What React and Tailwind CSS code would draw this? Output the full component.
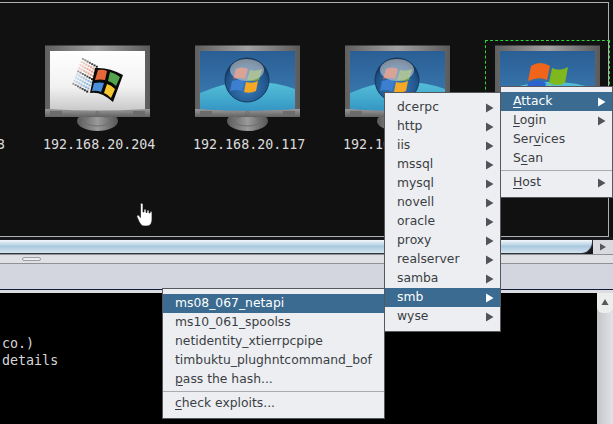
import React from 'react';

const attackItems = ['dcerpc', 'http', 'iis', 'mssql', 'mysql', 'novell', 'oracle', 'proxy', 'realserver', 'samba', 'smb', 'wyse'];

const hosts = [
  { id: 'w2k', os: 'win2000', label: '192.168.20.204', left: 'left-[45px]' },
  { id: 'v1', os: 'vista', label: '192.168.20.117', left: 'left-[195px]' },
  { id: 'v2', os: 'vista', label: '192.168.20.117', left: 'left-[345px]' },
  { id: 'w7', os: 'win7', label: '', left: 'left-[495px]' },
];

function Monitor({ id, os }) {
  const dots = [];
  for (let col = 0; col < 7; col++) {
    for (let row = 0; row < 9; row++) {
      const x = 37 - row * 1.2 + col * 2.3;
      const y = 13 + row * 3.1 + col * 1.3;
      const top = row < 4;
      dots.push(
        <rect
          key={col + '-' + row}
          x={x}
          y={y}
          width="2"
          height="1.9"
          fill={row === 0 || row === 4 || row === 8 ? '#1c1c1c' : top ? '#e58f76' : '#7fadd8'}
          opacity={0.4 + col * 0.1}
        />
      );
    }
  }

  return (
    <svg width="105" height="86" viewBox="0 0 105 86" className="block">
      <defs>
        <linearGradient id={id + 'frame'} x1="0" y1="0" x2="1" y2="0">
          <stop offset="0" stopColor="#5f5f5f" />
          <stop offset="0.5" stopColor="#a2a2a2" />
          <stop offset="1" stopColor="#5a5a5a" />
        </linearGradient>
        <linearGradient id={id + 'chin'} x1="0" y1="0" x2="0" y2="1">
          <stop offset="0" stopColor="#9a9a9a" />
          <stop offset="1" stopColor="#626262" />
        </linearGradient>
        <linearGradient id={id + 'white'} x1="0" y1="0" x2="0" y2="1">
          <stop offset="0" stopColor="#ffffff" />
          <stop offset="0.6" stopColor="#f2f2f2" />
          <stop offset="1" stopColor="#c9c9c9" />
        </linearGradient>
        <linearGradient id={id + 'blue'} x1="0" y1="0" x2="0" y2="1">
          <stop offset="0" stopColor="#2a5f95" />
          <stop offset="1" stopColor="#3d7fb6" />
        </linearGradient>
        <linearGradient id={id + 'hill'} x1="0" y1="0" x2="0" y2="1">
          <stop offset="0" stopColor="#55c0d8" />
          <stop offset="1" stopColor="#3597c4" />
        </linearGradient>
        <radialGradient id={id + 'orb'} cx="0.5" cy="0.65" r="0.6">
          <stop offset="0" stopColor="#3a7fc0" />
          <stop offset="0.8" stopColor="#1f5288" />
          <stop offset="1" stopColor="#123256" />
        </radialGradient>
        <linearGradient id={id + 'stand'} x1="0" y1="0" x2="1" y2="0">
          <stop offset="0" stopColor="#5a5a5a" />
          <stop offset="0.5" stopColor="#9a9a9a" />
          <stop offset="1" stopColor="#555555" />
        </linearGradient>
      </defs>

      <ellipse cx="52.5" cy="76" rx="20.5" ry="10" fill={`url(#${id}stand)`} />
      <ellipse cx="52.5" cy="76" rx="13" ry="5" fill="none" stroke="#6d6d6d" />
      <rect x="0" y="0.5" width="105" height="71.5" fill={`url(#${id}frame)`} />
      <rect x="0" y="64" width="105" height="8" fill={`url(#${id}chin)`} />
      <rect x="5" y="66" width="12" height="4.5" fill="#6c6c6c" />
      <rect x="88" y="66" width="12" height="4.5" fill="#6c6c6c" />
      <circle cx="52.5" cy="68" r="1.5" fill="none" stroke="#6e6e6e" />

      {os === 'win2000' ? (
        <>
          <path d="M5 6H100V64Q52 67 5 64Z" fill={`url(#${id}white)`} />
          {dots}
          <path d="M50 23Q64 22 78 30L68 57Q56 46 45 48Z" fill="#0b0b0b" />
          <path d="M53 25Q58 24 62 26L60 35Q55 34 50 35Z" fill="#e4683a" />
          <path d="M65 27Q70 28 75 32L71 41Q67 37 63 36Z" fill="#55a44c" />
          <path d="M49 38Q55 37 59 38L56 47Q52 45 47 46Z" fill="#4a8fdb" />
          <path d="M62 39Q66 40 70 44L66 53Q62 49 59 48Z" fill="#f7c92e" />
        </>
      ) : (
        <>
          <path d="M5 6H100V64Q52 67 5 64Z" fill={`url(#${id}blue)`} />
          <path d="M5 48Q30 37 52 37Q80 36 100 44V64Q52 67 5 64Z" fill={`url(#${id}hill)`} />
        </>
      )}

      {os === 'vista' && (
        <>
          <circle cx="52" cy="35" r="22" fill={`url(#${id}orb)`} stroke="#17395f" />
          <path d="M41 24Q47 21 53 24L50 34Q44 32 38 34Z" fill="#d9634a" />
          <path d="M55 25Q61 27 67 24L64 35Q58 37 52 35Z" fill="#6fa34b" />
          <path d="M37 36Q43 34 49 36L47 46Q41 44 35 46Z" fill="#3c7fd0" />
          <path d="M51 37Q57 39 63 36L61 46Q55 49 49 47Z" fill="#f4a825" />
          <ellipse cx="52" cy="25" rx="17" ry="11" fill="#d8d8d8" opacity="0.55" />
        </>
      )}

      {os === 'win7' && (
        <>
          <path d="M36 21Q45 15 55 21L52 35Q44 31 33 36Z" fill="#f0651a" />
          <path d="M57 23Q65 27 73 22L70 38Q63 42 54 38Z" fill="#7fb81c" />
          <path d="M33 38Q42 33 51 38L48 52H30Z" fill="#2a62d0" />
          <path d="M54 40Q62 44 70 41L68 52H50Z" fill="#f5bd1b" />
        </>
      )}
    </svg>
  );
}

function Arrow({ active }) {
  return (
    <svg width="8" height="10" viewBox="0 0 8 10" className="shrink-0">
      <path d="M0 0.5L7.5 5L0 9.5Z" fill={active ? '#ffffff' : '#50535a'} />
    </svg>
  );
}

function MenuRow({ active, sub, children }) {
  return (
    <div
      className={
        'flex h-[19px] items-center justify-between pl-3 pr-[6px] ' +
        (active ? 'bg-[#3b6b90] text-white' : 'text-[#3a3e42]')
      }
    >
      <span className="mb-[1px] whitespace-nowrap">{children}</span>
      {sub && <Arrow active={active} />}
    </div>
  );
}

function Mnemonic({ children }) {
  return <span className="underline underline-offset-2">{children}</span>;
}

function Separator() {
  return <div className="my-[2px] h-px bg-[#a9abae]" />;
}

function Menu({ className, children }) {
  return (
    <div
      className={
        'absolute border border-[#55585c] bg-[#edeef2] py-[5px] text-[12.35px] leading-[19px] [font-family:"DejaVu_Sans",sans-serif] ' +
        className
      }
    >
      {children}
    </div>
  );
}

function HandCursor() {
  return (
    <svg width="18" height="25" viewBox="0 0 18 25" className="absolute left-[136px] top-[202px]">
      <path
        d="M4.5 2.5C4.5 .8 7 .8 7 2.5V10L8 10V8C8 6.8 10 6.8 10 8V10.5H11V9C11 7.8 13 7.8 13 9V11H14V10.5C14 9.3 16 9.3 16 10.5V17C16 21 14.5 24 11 24H8C5.5 24 4.5 22 3 19.5L1 15C.4 13.5 2 12.5 3 13.5L4.5 15.5Z"
        fill="#ffffff"
        stroke="#1a1a1a"
        strokeWidth="0.7"
      />
    </svg>
  );
}

export default function App() {
  return (
    <div className="relative flex h-[424px] w-[613px] flex-col overflow-hidden bg-[#d3d6de] [font-family:'DejaVu_Sans_Mono',monospace]">
      {/* Host graph */}
      <div className="relative h-[237px] shrink-0 bg-[#111111]">
        <div className="absolute left-0 top-[2px] h-[235px] w-[609px] border-r border-t border-b border-[#aeb2b4]" />
        {hosts.map((h) => (
          <div key={h.id} className={'absolute top-[45px] ' + h.left}>
            <Monitor id={h.id} os={h.os} />
            <div className="-ml-[2px] mt-[6px] w-[112px] text-center text-[13.33px] leading-[16px] text-[#dcdcdc]">{h.label}</div>
          </div>
        ))}
        <div className="absolute right-[608px] top-[137px] text-[13.33px] leading-[16px] text-[#dcdcdc]">3</div>
        <div className="absolute left-[485px] top-[40px] h-[60px] w-[125px] border border-dashed border-[#2bd636]" />
        <HandCursor />
      </div>

      {/* Horizontal scrollbar */}
      <div className="flex h-[17px] shrink-0 items-stretch bg-[#17191c] pt-[3px]">
        <div className="h-[14px] w-[593px] rounded-br-[12px] border-b border-r border-[#31363b] bg-gradient-to-b from-[#f3f7fa] via-[#a9c9df] to-[#d4e4ef]" />
        <div className="flex w-[20px] items-center justify-center bg-[#d8dae0]">
          <svg width="8" height="8" viewBox="0 0 8 8">
            <path d="M1 0.5L7 4L1 7.5Z" fill="#55585c" />
          </svg>
        </div>
      </div>

      {/* Split divider */}
      <div className="flex h-[10px] shrink-0 items-center border-y border-[#8f9296] bg-[#dfe0e3] pl-[22px]">
        <div className="h-[4px] w-[19px] rounded-full border border-[#9a9da1] bg-[#eeeeee]" />
      </div>

      {/* Tab strip */}
      <div className="h-[26px] shrink-0 border-b border-[#0f1c38] bg-[#d3d6de]" />
      <div className="h-[3px] shrink-0 bg-[#dcdde2]" />

      {/* Console */}
      <div className="flex min-h-0 flex-1 bg-black">
        <div className="flex-1 pl-[2px] pt-[42px] text-[13.33px] leading-[17px] text-[#d6d6d6]">
          <div>co.)</div>
          <div>details</div>
        </div>
        <div className="flex w-[16px] flex-col bg-gradient-to-r from-[#c4c5c8] to-[#e2e3e6]">
          <div className="flex h-[20px] justify-center rounded-b-[6px] bg-[#eceded] pt-[5px]">
            <svg width="8" height="8" viewBox="0 0 8 8">
              <path d="M4 1L7.5 7H.5Z" fill="#55585c" />
            </svg>
          </div>
        </div>
      </div>

      <Menu className="left-[162px] top-[288px] w-[223px]">
        <MenuRow active>ms08_067_netapi</MenuRow>
        <MenuRow>ms10_061_spoolss</MenuRow>
        <MenuRow>netidentity_xtierrpcpipe</MenuRow>
        <MenuRow>timbuktu_plughntcommand_bof</MenuRow>
        <MenuRow>
          <Mnemonic>p</Mnemonic>ass the hash...
        </MenuRow>
        <Separator />
        <MenuRow>
          <Mnemonic>c</Mnemonic>heck exploits...
        </MenuRow>
      </Menu>

      <Menu className="left-[384px] top-[92px] w-[117px]">
        {attackItems.map((name) => (
          <MenuRow key={name} sub active={name === 'smb'}>
            {name}
          </MenuRow>
        ))}
      </Menu>

      <Menu className="left-[500px] top-[86px] w-[113px]">
        <MenuRow sub active>
          <Mnemonic>A</Mnemonic>ttack
        </MenuRow>
        <MenuRow sub>
          <Mnemonic>L</Mnemonic>ogin
        </MenuRow>
        <MenuRow>
          Ser<Mnemonic>v</Mnemonic>ices
        </MenuRow>
        <MenuRow>
          S<Mnemonic>c</Mnemonic>an
        </MenuRow>
        <Separator />
        <MenuRow sub>
          <Mnemonic>H</Mnemonic>ost
        </MenuRow>
      </Menu>
    </div>
  );
}
